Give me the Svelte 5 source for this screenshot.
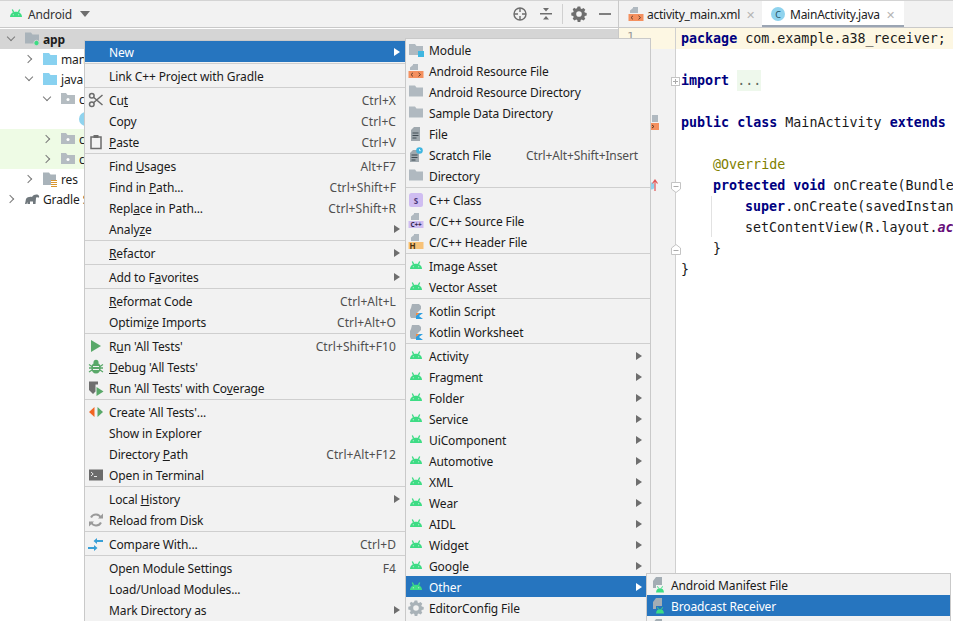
<script>
  const mainMenu = [
    [{ t: 'New', arrow: 1, sel: 1 }],
    [{ t: 'Link C++ Project with Gradle' }],
    [{ t: 'Cu_t', k: 'Ctrl+X', i: 'cut' }, { t: 'Copy', k: 'Ctrl+C' }, { t: '_Paste', k: 'Ctrl+V', i: 'paste' }],
    [{ t: 'Find _Usages', k: 'Alt+F7' }, { t: 'Find in _Path...', k: 'Ctrl+Shift+F' }, { t: 'Repl_ace in Path...', k: 'Ctrl+Shift+R' }, { t: 'Analy_ze', arrow: 1 }],
    [{ t: '_Refactor', arrow: 1 }],
    [{ t: 'Add to F_avorites', arrow: 1 }],
    [{ t: '_Reformat Code', k: 'Ctrl+Alt+L' }, { t: 'Optimi_ze Imports', k: 'Ctrl+Alt+O' }],
    [{ t: 'R_un \'All Tests\'', k: 'Ctrl+Shift+F10', i: 'run' }, { t: '_Debug \'All Tests\'', i: 'debug' }, { t: 'Run \'All Tests\' with Co_verage', i: 'cover' }],
    [{ t: 'Create \'All Tests\'...', i: 'create' }, { t: 'Show in Explorer' }, { t: 'Directory _Path', k: 'Ctrl+Alt+F12' }, { t: 'Open in Terminal', i: 'term' }],
    [{ t: 'Local _History', arrow: 1 }, { t: 'Reload from Disk', i: 'reload' }],
    [{ t: 'Compare With...', k: 'Ctrl+D', i: 'compare' }],
    [{ t: 'Open Module Settings', k: 'F4' }, { t: 'Load/Unload Modules...' }, { t: 'Mark Directory as', arrow: 1 }]
  ];
  const droid = (t, sel) => ({ t, i: 'droid', arrow: 1, sel });
  const newMenu = [
    [{ t: 'Module', i: 'module' }, { t: 'Android Resource File', i: 'xml' }, { t: 'Android Resource Directory', i: 'folder' }, { t: 'Sample Data Directory', i: 'folder' }, { t: 'File', i: 'file' }, { t: 'Scratch File', k: 'Ctrl+Alt+Shift+Insert', i: 'scratch' }, { t: 'Directory', i: 'folder' }],
    [{ t: 'C++ Class', i: 'cls' }, { t: 'C/C++ Source File', i: 'cpp' }, { t: 'C/C++ Header File', i: 'hdr' }],
    [{ t: 'Image Asset', i: 'droid' }, { t: 'Vector Asset', i: 'droid' }],
    [{ t: 'Kotlin Script', i: 'kotlin' }, { t: 'Kotlin Worksheet', i: 'kotlin' }],
    [droid('Activity'), droid('Fragment'), droid('Folder'), droid('Service'), droid('UiComponent'), droid('Automotive'), droid('XML'), droid('Wear'), droid('AIDL'), droid('Widget'), droid('Google'), droid('Other', 1), { t: 'EditorConfig File', i: 'gear' }]
  ];
  const otherMenu = [
    [{ t: 'Android Manifest File', i: 'afile' }, { t: 'Broadcast Receiver', i: 'afile', sel: 1 }, { t: 'Content Provider', i: 'afile' }]
  ];
  const tree = [
    { d: 1, c: 'd', i: 'app', t: 'app', cls: 'sel' },
    { d: 2, c: 'r', i: 'blue', t: 'manifests' },
    { d: 2, c: 'd', i: 'blue', t: 'java' },
    { d: 3, c: 'd', i: 'pkg', t: 'com.example.a38_receiver' },
    { d: 4, i: 'c', t: 'MainActivity' },
    { d: 3, c: 'r', i: 'pkg', t: 'com.example', cls: 'green' },
    { d: 3, c: 'r', i: 'pkg', t: 'com.example', cls: 'green' },
    { d: 2, c: 'r', i: 'res', t: 'res' },
    { d: 1, c: 'r', i: 'gradle', t: 'Gradle Scripts' }
  ];
  const parts = (s) => {
    const n = s.indexOf('_');
    return n < 0 ? [s, '', ''] : [s.slice(0, n), s[n + 1], s.slice(n + 2)];
  };
</script>

{#snippet droidHead()}
  <path fill="#3ddc84" d="M2 11c.2-3 2.300-5.200 6-5.200s5.800 2.200 6 5.200z"/>
  <path stroke="#3ddc84" stroke-width="1.300" d="M4.300 3.400l1.400 3.200M11.700 3.400l-1.400 3.200"/>
  <circle cx="5.300" cy="8.800" r=".55" fill="#f2f2f2"/><circle cx="10.700" cy="8.800" r=".55" fill="#f2f2f2"/>
{/snippet}

{#snippet icon(n)}
  <svg class="ic" width="16" height="16" viewBox="0 0 16 16" fill="none">
    {#if n === 'droid'}
      {@render droidHead()}
    {:else if n === 'folder'}
      <path fill="#b0b9c0" d="M1 1.500h6l1.500 2H15v9H1z"/>
    {:else if n === 'module'}
      <path fill="#b0b9c0" d="M1 2h6l1.500 2H15v9H1z"/><rect x="10" y="9" width="6" height="6" fill="#40b6e0"/>
    {:else if n === 'xml'}
      <path fill="#b0b9c0" d="M5 1h5v6H5z"/><path fill="#b0b9c0" d="M2 4.500L5 2v5H2z"/><rect x="0.500" y="8" width="15" height="7" fill="#f4905f"/>
      <path stroke="#5a3a28" stroke-width=".9" d="M5 9.800l-2 1.800 2 1.800M10.500 9.800l2 1.800-2 1.800"/>
    {:else if n === 'file'}
      <path fill="#9fa8ae" d="M6 1h6v14H3V4z"/><path stroke="#3f4a52" d="M4.500 7h6M4.500 9.500h6M4.500 12h4"/>
    {:else if n === 'scratch'}
      <path fill="#9fa8ae" d="M5 3h6v12H2V6z"/><path stroke="#3f4a52" d="M3.500 8h6M3.500 10.500h6M3.500 13h4"/>
      <circle cx="11.500" cy="3.500" r="3.300" fill="#40b6e0"/><path stroke="#fff" stroke-width=".8" d="M11.500 2v1.700h1.300"/>
    {:else if n === 'cls'}
      <rect x="1" y="1" width="14" height="14" rx="2.500" fill="#cfbdf1"/>
      <text x="8" y="11.500" class="tiny" text-anchor="middle" fill="#4c3a78">S</text>
    {:else if n === 'cpp'}
      <path fill="#b0b9c0" d="M6 0h5v7H6zM3 3.500L6 1v6H3z"/><rect x="0.500" y="8" width="15" height="7" fill="#cfbdf1"/>
      <text x="8" y="14" class="tiny2" text-anchor="middle" fill="#33264f">C++</text>
    {:else if n === 'hdr'}
      <path fill="#b0b9c0" d="M6 0h5v7H6zM3 3.500L6 1v6H3z"/><rect x="0.500" y="8" width="15" height="7" fill="#f7c278"/>
      <text x="4.500" y="14.500" class="tiny" text-anchor="middle" fill="#4a3210">H</text>
    {:else if n === 'kotlin'}
      <path fill="#a8b1b8" d="M4 1h7l2 2v3l-4 4v5H3l-1-2V7l1-2z"/>
      <path fill="#f88a3e" d="M8 10h4l-4 3z"/><path fill="#2d9fe0" d="M8 16v-3l3.500-3H15l-4 3 4 3z"/>
    {:else if n === 'gear'}
      <path fill="#a9b2b8" fill-rule="evenodd" d="M6.700 1.500h2.600l.4 1.900 1.100.5 1.700-1 1.800 1.800-1 1.700.5 1.100 1.900.4v2.600l-1.900.4-.5 1.100 1 1.700-1.800 1.800-1.700-1-1.100.5-.4 1.900H6.700l-.4-1.900-1.100-.5-1.700 1-1.800-1.800 1-1.700-.5-1.100-1.900-.4V7.700l1.900-.4.500-1.100-1-1.700L3.100 2.700l1.700 1 1.100-.5zM8 6.200a2.800 2.800 0 1 0 0 5.600 2.800 2.800 0 0 0 0-5.600z" transform="translate(0 -1)"/>
    {:else if n === 'afile'}
      <path fill="#a3adb4" d="M6 0h6v8H6v3H3V4z"/>
      <path fill="#3ddc84" d="M6 15.500c.1-2.800 1.700-4.300 4-4.300s3.900 1.500 4 4.300z"/>
      <path stroke="#3ddc84" d="M7.500 9.300l1 2M12.500 9.300l-1 2"/>
    {:else if n === 'cut'}
      <g stroke="#6b6b6b" stroke-width="1.500"><circle cx="3.800" cy="3.800" r="2.300"/><circle cx="3.800" cy="12.200" r="2.300"/><path d="M5.500 5.300L14.500 13M5.500 10.700L14.500 3"/></g>
    {:else if n === 'paste'}
      <rect x="3" y="3" width="10" height="11.500" stroke="#6b6b6b" stroke-width="1.500"/><rect x="5.500" y="1" width="5" height="3" fill="#6b6b6b"/>
    {:else if n === 'run'}
      <path fill="#59a869" d="M3 2l10 6-10 6z"/>
    {:else if n === 'debug'}
      <g fill="#59a869"><ellipse cx="8" cy="9" rx="4.700" ry="5.500"/><circle cx="8" cy="3.200" r="2.500"/></g>
      <path stroke="#59a869" stroke-width="1.300" d="M1 5.500l3 2M15 5.500l-3 2M1 9h3M15 9h-3M1 13l3-2M15 13l-3-2"/>
      <path stroke="#f2f2f2" d="M5 7.500h6M5 10.500h6"/>
    {:else if n === 'cover'}
      <path fill="#6e6e6e" d="M1 1.500h9v3H7.500v7L5 14 1 10z"/><path fill="#59a869" d="M8.500 7l7 4.500-7 4.500z"/>
    {:else if n === 'create'}
      <path fill="#f26522" d="M6.500 3v10L1 8z"/><path fill="#59a869" d="M9.500 3v10L15 8z"/>
    {:else if n === 'term'}
      <rect x="1" y="2.500" width="14" height="11" fill="#6b6b6b"/><path stroke="#e8e8e8" d="M3 5l2.200 2L3 9M6 9.500h3"/>
    {:else if n === 'reload'}
      <path stroke="#9a9a9a" stroke-width="2" d="M13 6a5.500 5.500 0 0 0-10-.5M3 10a5.500 5.500 0 0 0 10 .5"/>
      <path fill="#9a9a9a" d="M10 6.500h5v-5zM6 9.500H1v5z"/>
    {:else if n === 'compare'}
      <path fill="#389fd6" d="M9 2l-3.500 3L9 8V6h6V4H9z"/><path fill="#389fd6" d="M7 8l3.500 3L7 14v-2H1v-2h6z" transform="translate(-1 1)"/>
    {:else if n === 'app'}
      <path fill="#a9b3ba" d="M1 1.500h6l1.500 2H15v9H1z"/><circle cx="12.500" cy="12" r="2.700" fill="#3ddc84" stroke="#d5d5d5"/>
    {:else if n === 'blue'}
      <path fill="#88d1f0" d="M1 2h6l1.500 2H15v10H1z"/>
    {:else if n === 'pkg'}
      <path fill="#b4bcc1" d="M1 2h5l1.500 2H15v9H1z"/><circle cx="8" cy="8.500" r="1.500" fill="#fff"/>
    {:else if n === 'c'}
      <circle cx="8" cy="8" r="7" fill="#8fd3ee"/>
    {:else if n === 'res'}
      <path fill="#a9b3ba" d="M1 1.500h6l1.500 2H14V9H9v5H1z"/><path stroke="#d9962d" d="M9 9.500h6M9 11.500h6M9 13.500h6M9 15.500h6"/>
    {:else if n === 'gradle'}
      <path fill="#70787d" d="M1 13l1-5c1-2 4-2.500 6-2 2-3 6-3 7-1 .4 1 0 2-1 1.500-1-.6-1.800-.5-2 .5l-.5 6h-2.500v-2.500H6V13H3.500v-2l-1 2z"/>
    {/if}
  </svg>
{/snippet}

{#snippet menu(groups, cls)}
  <div class="menu {cls}">
    {#each groups as g, gi}
      {#if gi}<div class="sep"></div>{/if}
      {#each g as r}
        {@const p = parts(r.t)}
        <div class="row" class:on={r.sel}>
          <span class="slot">{#if r.i}{@render icon(r.i)}{/if}</span>
          <span class="lbl">{p[0]}{#if p[1]}<u>{p[1]}</u>{/if}{p[2]}</span>
          {#if r.k}<span class="key">{r.k}</span>{/if}
          {#if r.arrow}<span class="arrow"></span>{/if}
        </div>
      {/each}
    {/each}
  </div>
{/snippet}

<div class="screen">
  <section class="project">
    <header class="pbar">
      <svg width="16" height="16" viewBox="0 0 16 16" fill="none" class="pdroid">{@render droidHead()}</svg>
      <span class="ptitle">Android</span>
      <span class="caret"></span>
      <span class="grow"></span>
      <svg class="tb" width="16" height="16" viewBox="0 0 16 16" fill="none" stroke="#6e6e6e" stroke-width="1.400"><circle cx="8" cy="8" r="6"/><path d="M8 2v4M8 10v4M2 8h4M10 8h4"/></svg>
      <svg class="tb close" width="16" height="16" viewBox="0 0 16 16" fill="#6e6e6e"><rect x="2" y="7" width="12" height="1.500"/><path d="M5 2h6L8 5.500zM5 13.500h6L8 10z"/></svg>
      <span class="vr"></span>
      <svg class="tb" width="16" height="16" viewBox="0 0 16 16"><path fill="#6e6e6e" fill-rule="evenodd" d="M6.700 1.500h2.600l.4 1.900 1.100.5 1.700-1 1.800 1.800-1 1.700.5 1.100 1.900.4v2.600l-1.900.4-.5 1.100 1 1.700-1.800 1.800-1.700-1-1.100.5-.4 1.900H6.700l-.4-1.900-1.100-.5-1.700 1-1.800-1.800 1-1.700-.5-1.100-1.900-.4V7.700l1.900-.4.500-1.100-1-1.700L3.100 2.700l1.700 1 1.100-.5zM8 6.200a2.800 2.800 0 1 0 0 5.600 2.800 2.800 0 0 0 0-5.600z" transform="translate(0 -1)"/></svg>
      <span class="minus"></span>
    </header>
    <div class="tree">
      {#each tree as n}
        <div class="node {n.cls || ''}" style="padding-left:{(n.d - 1) * 18 + 4}px">
          <span class="chev {n.c || ''}"></span>
          <span class="nico">{@render icon(n.i)}</span>
          <span class="ntext" class:bold={n.cls === 'sel'}>{n.t}</span>
        </div>
      {/each}
    </div>
  </section>

  <section class="editor">
    <div class="tabs">
      <div class="tab">
        <svg width="16" height="16" viewBox="0 0 16 16" fill="none" class="ticon">
          <path fill="#b0b9c0" d="M5 1h5v6H5z"/><path fill="#b0b9c0" d="M2 4.500L5 2v5H2z"/><rect x="0.500" y="8" width="15" height="7" fill="#f4905f"/>
          <path stroke="#5a3a28" stroke-width=".9" d="M5 9.800l-2 1.800 2 1.800M10.500 9.800l2 1.800-2 1.800"/>
        </svg>
        <span>activity_main.xml</span><span class="x">✕</span>
      </div>
      <div class="tab active">
        <span class="cbadge">C</span>
        <span>MainActivity.java</span><span class="x">✕</span>
      </div>
    </div>
    <div class="body">
      <div class="gutter">
        <div class="gline">1</div>
        <span class="fold plus"></span>
        <svg class="mark one" width="10" height="11" viewBox="0 0 10 11"><path d="M.5.500h9v6.500L5 10.500.5 7z" fill="#fff" stroke="#c4c4c4"/><path d="M2.500 4.500h5" stroke="#aaa"/></svg>
        <svg class="mark two" width="10" height="11" viewBox="0 0 10 11"><path d="M.5 10.500h9V4L5 .5.500 4z" fill="#fff" stroke="#c4c4c4"/><path d="M2.500 6.500h5" stroke="#aaa"/></svg>
        <svg class="gx" width="10" height="16" viewBox="0 0 10 16"><rect x="2" width="6" height="7" fill="#b0b9c0"/><rect y="8" width="9" height="7" fill="#f4905f"/><path d="M2 10l2 1.500L2 13" stroke="#5a3a28" fill="none"/></svg>
        <svg class="gup" width="12" height="12" viewBox="0 0 12 12"><circle cx="3" cy="7" r="3.500" fill="#8fd3ee"/><path d="M7 12V2M4.500 4.500L7 1l2.500 3.500" stroke="#e05555" fill="none" stroke-width="1.200"/></svg>
      </div>
      <div class="code">
        <div class="ln hl"><b>package</b> com.example.a38_receiver;</div>
        <div class="ln"></div>
        <div class="ln"><b>import</b> <span class="imp">...</span></div>
        <div class="ln"></div>
        <div class="ln"><b>public class</b> MainActivity <b>extends</b> AppCompatActivity {'{'}</div>
        <div class="ln"></div>
        <div class="ln in1"><span class="ann">@Override</span></div>
        <div class="ln in1"><b>protected void</b> onCreate(Bundle savedInstanceState) {'{'}</div>
        <div class="ln in2"><b>super</b>.onCreate(savedInstanceState);</div>
        <div class="ln in2">setContentView(R.layout.<i>activity_main</i>);</div>
        <div class="ln in1">{'}'}</div>
        <div class="ln">{'}'}</div>
        <span class="guide"></span>
      </div>
    </div>
  </section>

  {@render menu(mainMenu, 'm1')}
  {@render menu(newMenu, 'm2')}
  {@render menu(otherMenu, 'm3')}
</div>

<style>
  :global(body) { margin: 0; background: #fff; }
  .screen {
    position: relative; width: 953px; height: 621px; overflow: hidden; display: flex;
    font: 12px "Noto Sans", sans-serif; letter-spacing: -0.12px; color: #1c1c1c; background: #fff;
  }
  .project { width: 618px; flex: none; border-right: 1px solid #c9c9c9; box-sizing: content-box; }
  .pbar {
    height: 26px; display: flex; align-items: center; background: #f2f2f2;
    border-top: 1px solid #d4d4d4; border-bottom: 1px solid #c9c9c9; padding-left: 8px;
  }
  .ptitle { margin-left: 4px; color: #333; }
  .caret { margin-left: 8px; border: 5px solid transparent; border-top: 6px solid #6e6e6e; border-bottom: 0; }
  .grow { flex: 1; }
  .tb { margin-right: 10px; flex: none; }
  .tb.close { margin-right: 8px; }
  .vr { width: 1px; height: 20px; background: #d0d0d0; margin: 0 8px 0 0; }
  .minus { width: 12px; height: 2px; background: #7f7f7f; margin: 0 7px 0 2px; }
  .tree { padding-top: 1px; }
  .node { height: 20px; display: flex; align-items: center; white-space: nowrap; }
  .node.sel { background: #d5d5d5; }
  .node.green { background: #eefbe5; }
  .chev { width: 14px; height: 14px; flex: none; position: relative; }
  .chev.r::after, .chev.d::after {
    content: ""; position: absolute; width: 5px; height: 5px; left: 3px; top: 4px;
    border-right: 1.300px solid #7a7a7a; border-bottom: 1.300px solid #7a7a7a; transform: rotate(-45deg);
  }
  .chev.d::after { transform: rotate(45deg); top: 2px; left: 4px; }
  .nico { width: 16px; height: 16px; flex: none; margin-left: 6px; }
  .ntext { margin-left: 3px; }
  .bold { font-weight: 700; }
  .ic { display: block; }

  .editor { flex: 1; display: flex; flex-direction: column; min-width: 0; }
  .tabs {
    height: 26px; display: flex; background: #f2f2f2; padding-left: 9px;
    border-top: 1px solid #d4d4d4; border-bottom: 1px solid #c9c9c9;
  }
  .tab { display: flex; align-items: center; white-space: nowrap; color: #222; width: 134px; letter-spacing: -0.25px; }
  .ticon { margin-right: 3px; flex: none; }
  .x { color: #b5b5b5; font-size: 11px; margin-left: 6px; }
  .tab.active { background: #fff; width: 142px; box-shadow: inset 0 -2px 0 #9ba5b3; padding-left: 9px; box-sizing: border-box; }
  .cbadge {
    width: 14px; height: 14px; border-radius: 50%; background: #8fd3ee; color: #1f4d60; font-size: 9px;
    display: flex; align-items: center; justify-content: center; margin-right: 5px;
  }
  .body { flex: 1; display: flex; }
  .gutter { width: 57px; flex: none; background: #f2f2f2; border-right: 1px solid #d0d0d0; position: relative; box-sizing: border-box; }
  .gline { height: 21px; background: #fdf7e3; text-align: right; padding-right: 41px; font: 12px "DejaVu Sans Mono", monospace; color: #999; line-height: 18px; }
  .fold { position: absolute; left: 52px; width: 7px; height: 7px; border: 1px solid #c4c4c4; background: #fff; }
  .plus { top: 49px; }
  .plus::after { content: ""; position: absolute; left: 1px; right: 1px; top: 3px; height: 1px; background: #aaa; }
  .plus::before { content: ""; position: absolute; top: 1px; bottom: 1px; left: 3px; width: 1px; background: #aaa; }
  .mark { position: absolute; left: 52px; }
  .one { top: 154px; }
  .two { top: 216px; }
  .gx { position: absolute; left: 31px; top: 87px; }
  .gup { position: absolute; left: 29px; top: 151px; }
  .code { flex: 1; position: relative; font: 13.330px "DejaVu Sans Mono", monospace; letter-spacing: 0; color: #1a1a1a; white-space: nowrap; overflow: hidden; }
  .ln { height: 21px; line-height: 21px; padding-left: 5px; }
  .ln.hl { background: #fdf7e3; }
  .ln b { color: #000080; }
  .ln i { color: #660e7a; font-weight: 700; }
  .in1 { padding-left: 37px; }
  .in2 { padding-left: 69px; }
  .ann { color: #808000; }
  .imp { background: #eef8ec; color: #5d6b5d; display: inline-block; line-height: 21px; }
  .guide { position: absolute; left: 35px; top: 168px; width: 1px; height: 41px; background: #e2e2e2; }

  .menu {
    position: absolute; background: #f2f2f2; border: 1px solid #c9c9c9; box-sizing: border-box; white-space: nowrap;
  }
  .m1 { left: 84px; top: 40px; width: 322px; height: 600px; }
  .m2 { left: 405px; top: 38px; width: 246px; height: 600px; }
  .m3 { left: 646px; top: 573px; width: 305px; height: 60px; }
  .row { height: 21px; display: flex; align-items: center; padding-left: 3px; color: #1a1a1a; }
  .row.on { background: #2675bf; color: #fff; }
  .slot { width: 16px; height: 16px; flex: none; margin-right: 5px; }
  .m2 .row { padding-left: 2px; padding-right: 8px; }
  .m3 .row { padding-left: 3px; }
  .lbl { flex: 1; padding-top: 2px; }
  .key { color: #4f4f4f; margin-right: 4px; padding-top: 2px; }
  .m1 .key { letter-spacing: 0.08px; }
  .m1 .row { padding-right: 5px; }
  .arrow { border: 4px solid transparent; border-left: 6px solid #6e6e6e; border-right: 0; }
  .on .arrow { border-left-color: #fff; }
  .sep { height: 3px; display: flex; align-items: center; }
  .sep::after { content: ""; flex: 1; height: 1px; background: #cfcfcf; }
  .tiny { font: 700 8px "Noto Sans", sans-serif; }
  .tiny2 { font: 700 6.500px "Noto Sans", sans-serif; }
</style>
